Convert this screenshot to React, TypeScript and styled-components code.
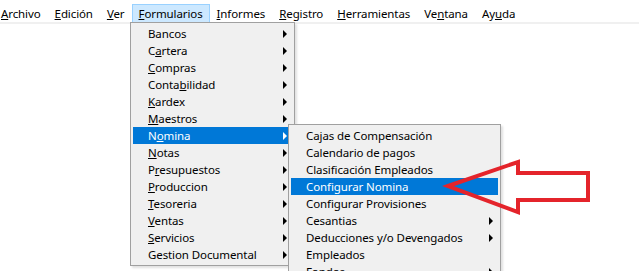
import React from "react";
import styled, { createGlobalStyle } from "styled-components";

const GlobalStyle = createGlobalStyle`
	html, body {
		margin: 0;
		background: #ffffff;
		overflow: hidden;
	}
	body {
		font-family: "Segoe UI", "Noto Sans", "Open Sans", sans-serif;
		font-size: 11.5px;
		letter-spacing: -0.1px;
		color: #000000;
	}
`;

const Screen = styled.div`
	position: relative;
	width: 639px;
	height: 271px;
	overflow: hidden;
	background: #ffffff;
`;

const MenuBar = styled.nav`
	display: flex;
	align-items: flex-start;
	height: 18px;
	padding-top: 4px;
	border-bottom: 2px solid #f0f0f0;
`;

const TopItem = styled.div<{ $active?: boolean }>`
	height: 18px;
	line-height: 18px;
	padding: 0 6px;
	box-sizing: border-box;
	border: 1px solid ${(p) => (p.$active ? "#99d1ff" : "transparent")};
	border-bottom: 0;
	background: ${(p) => (p.$active ? "#cce8ff" : "transparent")};
	white-space: nowrap;

	&:first-child {
		padding-left: 1px;
		border-left: 0;
	}
`;

const Popup = styled.div<{ $left: number; $top: number; $width: number }>`
	position: absolute;
	left: ${(p) => p.$left}px;
	top: ${(p) => p.$top}px;
	width: ${(p) => p.$width}px;
	box-sizing: border-box;
	padding: 2px;
	background: #f0f0f0;
	border: 1px solid #a0a0a0;
	box-shadow: 2px 2px 2px rgba(0, 0, 0, 0.12);
`;

const Row = styled.div<{ $selected?: boolean }>`
	display: flex;
	align-items: center;
	height: 17px;
	line-height: 17px;
	padding: 0 5px 0 15px;
	background: ${(p) => (p.$selected ? "#0078d7" : "transparent")};
	color: ${(p) => (p.$selected ? "#ffffff" : "#000000")};
	white-space: nowrap;
`;

const Label = styled.span`
	flex: 1;
`;

const SubArrow = styled.span<{ $selected?: boolean }>`
	width: 0;
	height: 0;
	border-top: 4px solid transparent;
	border-bottom: 4px solid transparent;
	border-left: 4px solid ${(p) => (p.$selected ? "#ffffff" : "#000000")};
`;

const Callout = styled.svg`
	position: absolute;
	left: 0;
	top: 0;
	pointer-events: none;
`;

type Entry = { text: string; key?: number; sub?: boolean; selected?: boolean };

const topMenus: Entry[] = [
	{ text: "Archivo", key: 0 },
	{ text: "Edición", key: 0 },
	{ text: "Ver", key: 0 },
	{ text: "Formularios", key: 0 },
	{ text: "Informes", key: 0 },
	{ text: "Registro", key: 0 },
	{ text: "Herramientas", key: 0 },
	{ text: "Ventana", key: 2 },
	{ text: "Ayuda", key: 2 },
];

const formularios: Entry[] = [
	{ text: "Bancos", sub: true },
	{ text: "Cartera", key: 1, sub: true },
	{ text: "Compras", key: 0, sub: true },
	{ text: "Contabilidad", key: 5, sub: true },
	{ text: "Kardex", key: 0, sub: true },
	{ text: "Maestros", key: 0, sub: true },
	{ text: "Nomina", key: 1, sub: true, selected: true },
	{ text: "Notas", key: 0, sub: true },
	{ text: "Presupuestos", key: 1, sub: true },
	{ text: "Produccion", key: 0, sub: true },
	{ text: "Tesoreria", key: 0, sub: true },
	{ text: "Ventas", key: 0, sub: true },
	{ text: "Servicios", key: 0, sub: true },
	{ text: "Gestion Documental", sub: true },
];

const nomina: Entry[] = [
	{ text: "Cajas de Compensación" },
	{ text: "Calendario de pagos" },
	{ text: "Clasificación Empleados" },
	{ text: "Configurar Nomina", selected: true },
	{ text: "Configurar Provisiones" },
	{ text: "Cesantias", sub: true },
	{ text: "Deducciones y/o Devengados", sub: true },
	{ text: "Empleados" },
	{ text: "Fondos", sub: true },
];

const Mnemonic = ({ text, index }: { text: string; index?: number }) => {
	if (index === undefined) return <>{text}</>;
	return (
		<>
			{text.slice(0, index)}
			<u>{text[index]}</u>
			{text.slice(index + 1)}
		</>
	);
};

const MenuRows = ({ items }: { items: Entry[] }) => (
	<>
		{items.map((item) => (
			<Row key={item.text} $selected={item.selected}>
				<Label>
					<Mnemonic text={item.text} index={item.key} />
				</Label>
				{item.sub && <SubArrow $selected={item.selected} />}
			</Row>
		))}
	</>
);

export default function App() {
	return (
		<Screen>
			<GlobalStyle />
			<MenuBar>
				{topMenus.map((menu) => (
					<TopItem key={menu.text} $active={menu.text === "Formularios"}>
						<Mnemonic text={menu.text} index={menu.key} />
					</TopItem>
				))}
			</MenuBar>
			<Popup $left={130} $top={22} $width={165}>
				<MenuRows items={formularios} />
			</Popup>
			<Popup $left={288} $top={124} $width={213}>
				<MenuRows items={nomina} />
			</Popup>
			<Callout width={639} height={271} viewBox="0 0 639 271">
				<polygon
					points="448,186 518,162 518,173 588,173 588,200 518,200 518,212"
					fill="none"
					stroke="#e4242b"
					strokeWidth={4}
					strokeLinejoin="miter"
				/>
			</Callout>
		</Screen>
	);
}
